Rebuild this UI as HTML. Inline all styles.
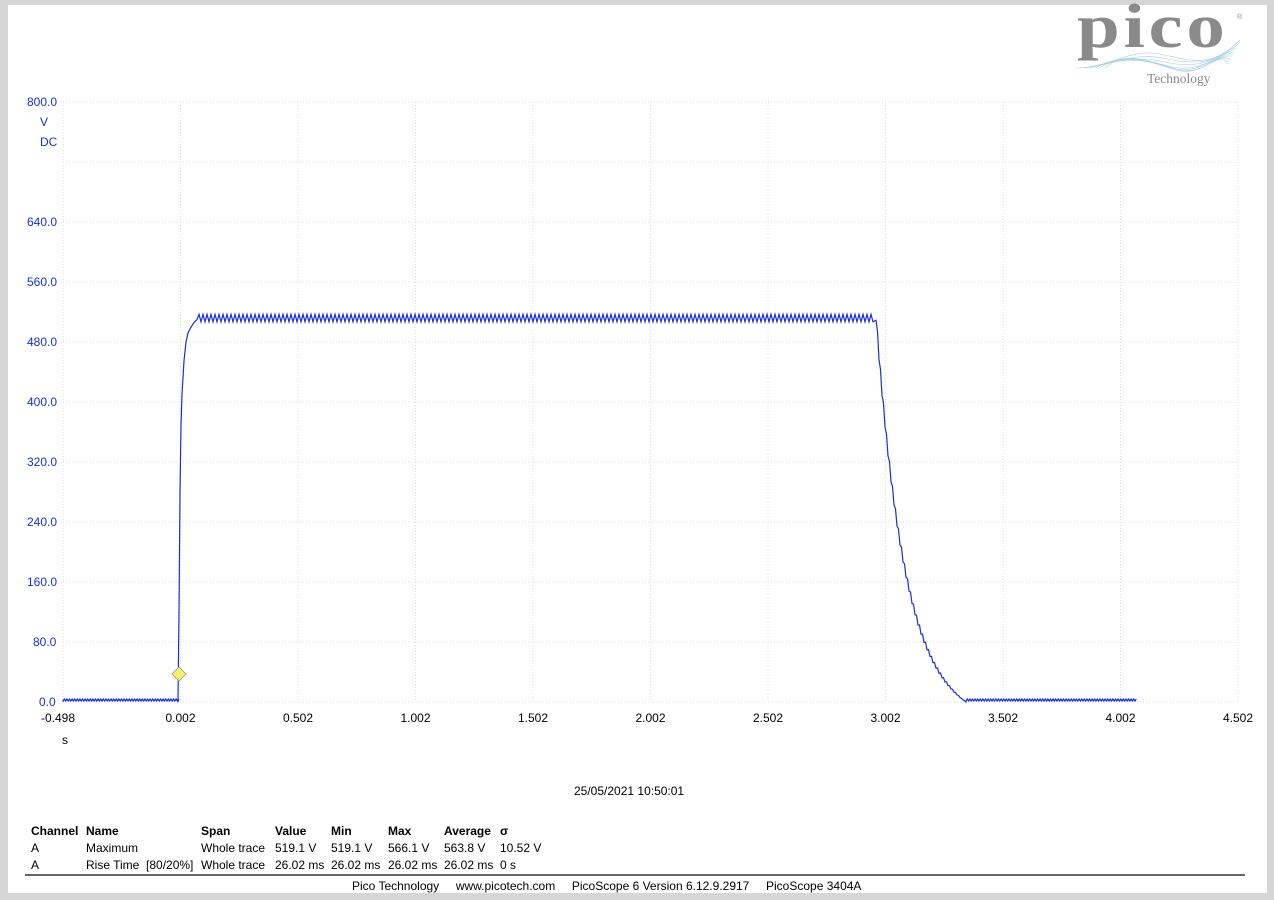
<!DOCTYPE html>
<html><head><meta charset="utf-8"><style>
html,body{margin:0;padding:0;width:1274px;height:900px;background:#d6d6d6;overflow:hidden;font-family:"Liberation Sans",sans-serif}
#page{position:absolute;left:8px;top:5px;width:1259px;height:888px;background:#fff}
.t{position:absolute;font-size:12px;white-space:nowrap}
.b{color:#1a2fd0}
.k{color:#000}
</style></head><body>
<div id="page"></div>
<svg width="1274" height="900" style="position:absolute;left:0;top:0" id="sv">
<g stroke="#d0dcea" stroke-width="1" stroke-dasharray="1,2" id="grid"></g>
<path id="tr" fill="none" stroke="#1a2fd0" stroke-width="1.2"/>
<polygon points="179,667 186,674 179,681 172,674" fill="#f5ef6a" stroke="#999" stroke-width="0.8"/>
<line x1="25" y1="875" x2="1245" y2="875" stroke="#666" stroke-width="2"/>
<g fill="none" stroke="#8fc3dd" stroke-width="0.6" opacity="0.8">
<path d="M1075,68 C1110,68 1130,48 1160,54 S1210,70 1240,40"/>
<path d="M1080,68 C1112,66 1132,52 1162,58 S1212,66 1238,44"/>
<path d="M1085,68 C1115,62 1135,55 1165,62 S1212,62 1236,48"/>
<path d="M1090,68 C1118,58 1140,58 1168,66 S1214,58 1234,52"/>
<path d="M1095,68 C1120,54 1145,60 1172,68 S1216,54 1232,56"/>
<path d="M1100,68 C1124,50 1150,62 1176,70 S1218,50 1230,60"/>
<path d="M1105,68 C1128,48 1155,64 1180,70 S1220,48 1228,64"/>
</g>
</svg>
<div class="t" style="left:1077px;top:-8px;font-family:'Liberation Serif',serif;font-weight:bold;font-size:62px;color:#8a8a8a;letter-spacing:3px;transform:scaleX(1.24);transform-origin:left">pico</div>
<div class="t" style="left:1237px;top:14px;font-size:7px;color:#888">®</div>
<div class="t" style="left:1147px;top:71px;font-family:'Liberation Serif',serif;font-size:13.5px;color:#888">Technology</div>
<div class="t b" style="left:27px;top:95px">800.0</div>
<div class="t b" style="left:40px;top:115px">V</div>
<div class="t b" style="left:40px;top:135px">DC</div>
<div id="yl"></div>
<div class="t k" style="left:62px;top:733px">s</div>
<div class="t k" style="left:574px;top:784px">25/05/2021 10:50:01</div>
<div id="tbl"></div>
<div class="t k" style="left:352px;top:879px">Pico Technology &nbsp;&nbsp;&nbsp; www.picotech.com &nbsp;&nbsp;&nbsp; PicoScope 6 Version 6.12.9.2917 &nbsp;&nbsp;&nbsp; PicoScope 3404A</div>
<script>
var g=document.getElementById('grid'),h='';
for(var i=0;i<=10;i++){var x=63+117.5*i;h+='<line x1="'+x+'" y1="102" x2="'+x+'" y2="702"/>';}
for(var j=0;j<=10;j++){var y=102+60*j;h+='<line x1="63" y1="'+y+'" x2="1238" y2="'+y+'"/>';}
g.innerHTML=h;
var yl='';
for(var j=0;j<=8;j++){var v=80*j,y=702-60*j;yl+='<div class="t b" style="left:'+(v<100?(v==0?39:33):27)+'px;top:'+(y-7)+'px">'+v.toFixed(1)+'</div>';}
var xs=['-0.498','0.002','0.502','1.002','1.502','2.002','2.502','3.002','3.502','4.002','4.502'];
for(var i=0;i<=10;i++){yl+='<div class="t k" style="left:'+(63+117.5*i-(i==0?22:15))+'px;top:711px">'+xs[i]+'</div>';}
document.getElementById('yl').innerHTML=yl;
function Y(v){return 702-v*0.75;}
var d='M63,'+Y(0);
for(var x=63;x<178;x+=2.6){d+=' L'+x+','+701+' L'+(x+1.3)+','+699;}
var rise=[[178,0],[179,120],[180,280],[181,370],[182,410],[184,455],[186,480],[188,492],[191,500],[194,506],[197,510]];
rise.forEach(function(p){d+=' L'+p[0]+','+Y(p[1]).toFixed(1);});
for(var x=197;x<873;x+=4){d+=' L'+(x+2)+','+Y(517).toFixed(1)+' L'+(x+4)+','+Y(507).toFixed(1);}
for(var x=876;x<966;x+=1.5){var t=(x-876)/90;var v=515*Math.exp(-3.2*t)-515*Math.exp(-3.2)*t;v+=(Math.floor(x/1.5)%2?6:-6)*(1-t);if(v<0)v=0;d+=' L'+x+','+Y(v).toFixed(1);}
d+=' L966,702';
for(var x=966;x<1135;x+=2.6){d+=' L'+x+','+701+' L'+(x+1.3)+','+699;}
document.getElementById('tr').setAttribute('d',d);
var cols=[31,86,201,275,331,388,444,500];
var rows=[['Channel','Name','Span','Value','Min','Max','Average','σ'],['A','Maximum','Whole trace','519.1 V','519.1 V','566.1 V','563.8 V','10.52 V'],['A','Rise Time &nbsp;[80/20%]','Whole trace','26.02 ms','26.02 ms','26.02 ms','26.02 ms','0 s']];
var tb='';
rows.forEach(function(r,ri){r.forEach(function(c,ci){tb+='<div class="t k" style="left:'+cols[ci]+'px;top:'+(824+17*ri)+'px;'+(ri==0?'font-weight:bold;':'')+'">'+c+'</div>';});});
document.getElementById('tbl').innerHTML=tb;
</script>
</body></html>
